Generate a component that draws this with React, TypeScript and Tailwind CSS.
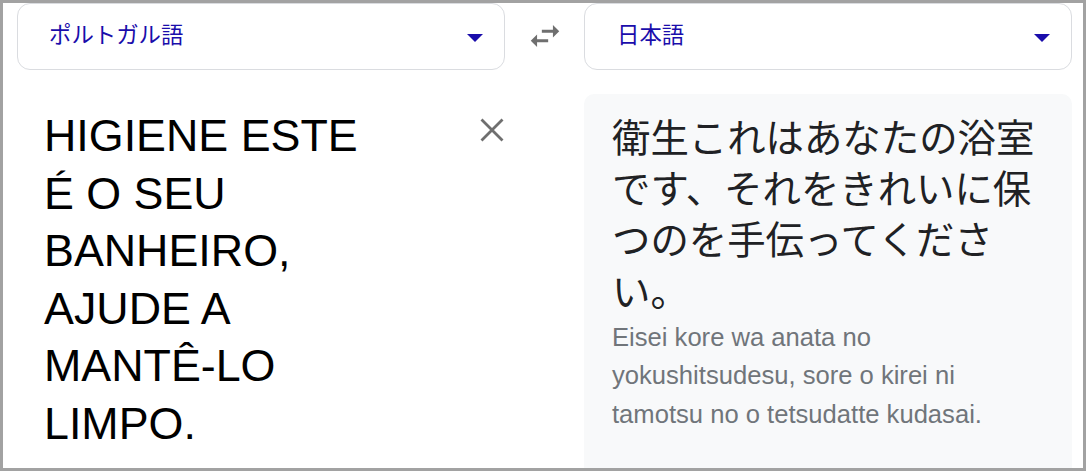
const SelectBox = ({ label, textPad }: { label: string; textPad: string }) => (
  <div className={`flex h-[67px] w-[488px] items-center rounded-[13px] border border-[#dadce0] bg-white pr-[21px] ${textPad}`}>
    <span className="text-[22.4px] leading-none text-[#1a0dab]">{label}</span>
    <svg className="ml-auto mt-[2px]" width="16" height="8" viewBox="0 0 16 8">
      <path d="M0 0 L8 8 L16 0 Z" fill="#1a0dab" />
    </svg>
  </div>
);

export default function App() {
  return (
    <div
      className="h-[471px] w-[1086px] overflow-hidden border-[3px] border-[#a2a2a2] bg-white"
      style={{ fontFamily: '"Liberation Sans", "Noto Sans CJK JP", sans-serif' }}
    >
      <div className="flex h-full flex-col pl-[14px]">
        {/* language pickers */}
        <div className="flex items-center">
          <SelectBox label="ポルトガル語" textPad="pl-[31px]" />
          <div className="flex w-[79px] justify-center">
            <svg width="38" height="38" viewBox="0 0 24 24" className="-mt-[1px]">
              <path
                d="M6.99 11L3 15l3.99 4v-3H14v-2H6.99v-3zM21 9l-3.99-4v3H10v2h7.01v3L21 9z"
                fill="#6f6f6f"
              />
            </svg>
          </div>
          <SelectBox label="日本語" textPad="pl-[32px]" />
        </div>

        <div className="mt-[24px] flex min-h-0 flex-1">
          {/* source */}
          <div className="flex w-[488px] pl-[27px] pt-[13px]">
            <div className="w-[340px] text-[44.8px] leading-[57.6px] text-black">
              HIGIENE ESTE É O SEU BANHEIRO, AJUDE A MANTÊ-LO LIMPO.
            </div>
            <svg className="ml-auto mr-[1px] mt-[11px]" width="24" height="24" viewBox="0 0 24 24">
              <path d="M1.5 1.5 L22.5 22.5 M22.5 1.5 L1.5 22.5" stroke="#6f6f6f" strokeWidth="2.8" />
            </svg>
          </div>

          <div className="w-[79px]" />

          {/* target */}
          <div className="w-[488px] rounded-t-[10px] bg-[#f8f9fa] pl-[28px] pt-[16px]">
            <div
              className="w-[436px] text-[38.4px] leading-[51.2px] text-[#202124]"
              style={{ fontFamily: '"Noto Sans CJK JP", sans-serif' }}
            >
              衛生これはあなたの浴室です、それをきれいに保つのを手伝ってください。
            </div>
            <div className="mt-[3px] w-[436px] text-[25.6px] leading-[38.4px] text-[#70757a]">
              Eisei kore wa anata no yokushitsudesu, sore o kirei ni tamotsu no o tetsudatte kudasai.
            </div>
          </div>
        </div>
      </div>
    </div>
  );
}
